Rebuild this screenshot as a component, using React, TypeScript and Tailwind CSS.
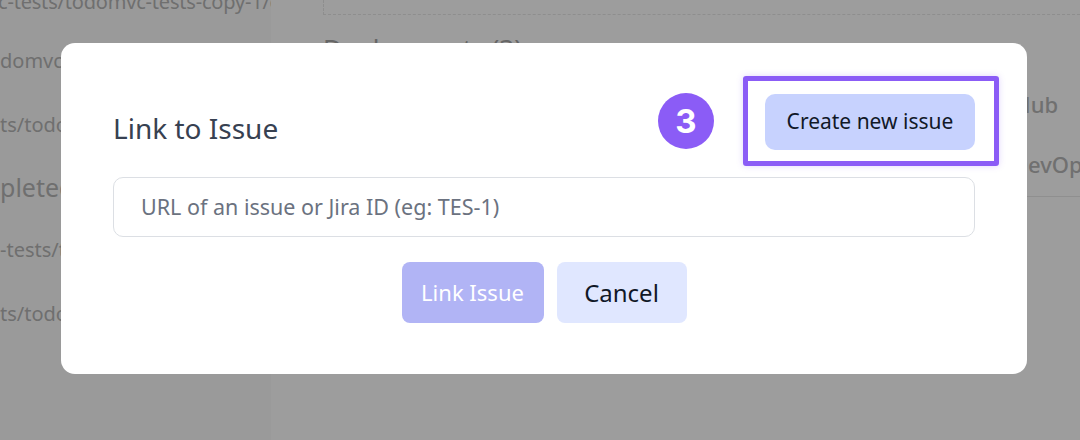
import React from "react";

const font = { fontFamily: '"Noto Sans", "Open Sans", sans-serif' };

export default function App() {
  return (
    <div
      className="relative w-[1080px] h-[440px] overflow-hidden bg-[#9d9d9d]"
      style={font}
    >
      {/* dimmed background page */}
      <div className="flex h-full">
        <div className="w-[271px] shrink-0 bg-[#9a9a9a] overflow-hidden text-[#6f6f6f] text-[20px] leading-[28px] whitespace-nowrap">
          <div className="-mt-[12px] -ml-[2px] tracking-[-0.2px]">c-tests/todomvc-tests-copy-1/cypress</div>
          <div className="mt-[31px]">domvc-tests/cypress</div>
          <div className="mt-[36px]">ts/todomvc-tests</div>
          <div className="mt-[32px] text-[25px] leading-[32px]">pleted runs</div>
          <div className="mt-[33px]">-tests/todomvc</div>
          <div className="mt-[36px]">ts/todomvc-tests</div>
        </div>
        <div className="flex-1 pl-[52px]">
          <div className="h-[15px] border-l border-b border-dashed border-[#8e8e8e] mr-[-20px]"></div>
          <div className="mt-[17px] text-[26px] text-[#666] leading-[32px]">Deployments (3)</div>
          <div className="flex justify-end mt-[25px]">
            <div className="w-[120px] text-[22px] font-medium text-[#707070] leading-[30px]">
              <div className="pl-[24px]">GitHub</div>
              <div className="mt-[30px] -ml-[14px] whitespace-nowrap">Azure DevOps</div>
              <div className="mt-[17px] h-px bg-[#8f8f8f] -ml-[20px]"></div>
            </div>
          </div>
        </div>
      </div>

      {/* modal */}
      <div className="absolute left-[61px] top-[43px] w-[966px] h-[331px] bg-white rounded-[14px] px-[52px] pt-[51px]">
        <div className="flex items-center justify-between h-[56px]">
          <h2 className="text-[28px] text-[#374151] mt-[12px] leading-[36px]">Link to Issue</h2>
          <div className="relative">
            <div
              className="absolute -left-[107px] top-[-1px] w-[56px] h-[56px] rounded-full bg-[#8b5cf6] flex items-center justify-center text-white text-[33px] font-bold leading-none"
              style={{ fontFamily: 'Inter, "Liberation Sans", sans-serif' }}
            >
              3
            </div>
            <div className="absolute -left-[22px] -right-[24px] -top-[18px] -bottom-[16px] border-[5px] border-[#8b5cf6] rounded-[3px] shadow-[0_0_6px_rgba(139,92,246,0.25)]"></div>
            <button className="relative w-[210px] h-[56px] rounded-[10px] bg-[#c7d2fe] text-[#111827] text-[21px]">
              Create new issue
            </button>
          </div>
        </div>
        <div className="mt-[27px] h-[60px] border border-[#dcdfe4] rounded-[10px] flex items-center px-[27px]">
          <span className="text-[21.5px] text-[#6b7280]">URL of an issue or Jira ID (eg: TES-1)</span>
        </div>
        <div className="mt-[25px] flex justify-center gap-[13px]">
          <button className="w-[142px] h-[61px] rounded-[8px] bg-[#b1b4f5] text-white text-[22px]">
            Link Issue
          </button>
          <button className="w-[130px] h-[61px] rounded-[8px] bg-[#e0e7ff] text-[#111827] text-[24px]">
            Cancel
          </button>
        </div>
      </div>
    </div>
  );
}
